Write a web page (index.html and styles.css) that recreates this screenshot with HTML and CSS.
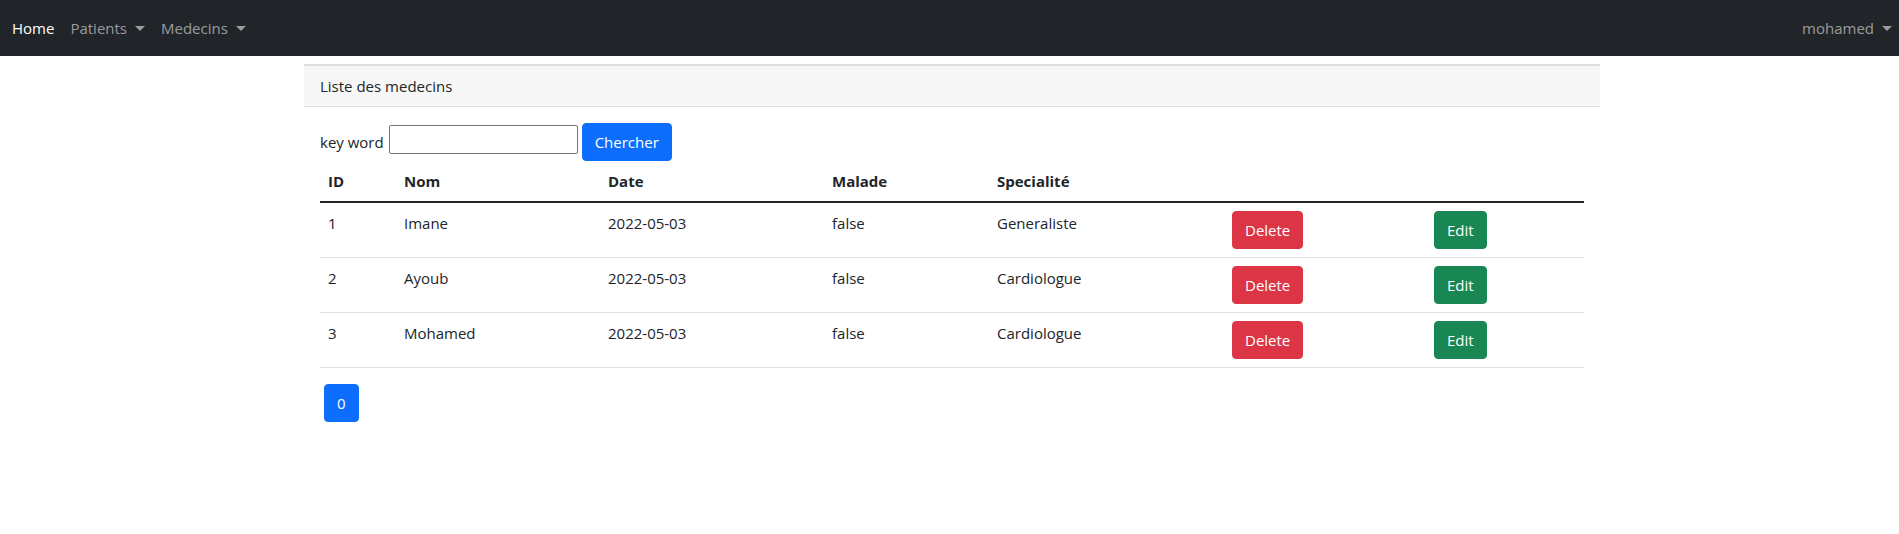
FILE: index.html
```html
<!DOCTYPE html>
<html lang="fr">
<head>
<meta charset="utf-8">
<title>Medecins</title>
<link rel="stylesheet" href="styles.css">
</head>
<body>
<nav class="navbar">
  <ul class="nav">
    <li><a class="nav-link active" href="#">Home</a></li>
    <li><a class="nav-link dropdown" href="#">Patients</a></li>
    <li><a class="nav-link dropdown" href="#">Medecins</a></li>
  </ul>
  <ul class="nav nav-right">
    <li><a class="nav-link dropdown" href="#">mohamed</a></li>
  </ul>
</nav>
<div class="page">
  <div class="container">
    <div class="card">
      <div class="card-header">Liste des medecins</div>
      <div class="card-body">
        <form class="search">
          <label class="search-label">key word</label>
          <input class="search-input" type="text">
          <button class="btn btn-primary" type="button">Chercher</button>
        </form>
        <table class="table">
          <thead>
            <tr>
              <th class="c-id">ID</th>
              <th class="c-nom">Nom</th>
              <th class="c-date">Date</th>
              <th class="c-malade">Malade</th>
              <th class="c-spec">Specialité</th>
              <th class="c-del"></th>
              <th class="c-edit"></th>
            </tr>
          </thead>
          <tbody>
            <tr>
              <td>1</td><td>Imane</td><td>2022-05-03</td><td>false</td><td>Generaliste</td>
              <td><a class="btn btn-danger" href="#">Delete</a></td>
              <td><a class="btn btn-success" href="#">Edit</a></td>
            </tr>
            <tr>
              <td>2</td><td>Ayoub</td><td>2022-05-03</td><td>false</td><td>Cardiologue</td>
              <td><a class="btn btn-danger" href="#">Delete</a></td>
              <td><a class="btn btn-success" href="#">Edit</a></td>
            </tr>
            <tr>
              <td>3</td><td>Mohamed</td><td>2022-05-03</td><td>false</td><td>Cardiologue</td>
              <td><a class="btn btn-danger" href="#">Delete</a></td>
              <td><a class="btn btn-success" href="#">Edit</a></td>
            </tr>
          </tbody>
        </table>
        <ul class="pagination">
          <li><a class="btn btn-primary page-btn" href="#">0</a></li>
        </ul>
      </div>
    </div>
  </div>
</div>
</body>
</html>
```
FILE: styles.css
```css
* { box-sizing: border-box; }
html, body { margin: 0; padding: 0; }
body {
  font-family: "Open Sans", "Noto Sans", sans-serif;
  font-size: 15px;
  line-height: 24px;
  color: #212529;
  background: #fff;
}
a { text-decoration: none; }

.navbar {
  display: flex;
  align-items: center;
  height: 56px;
  background: #212529;
  padding: 0 0 0 4px;
}
.nav {
  display: flex;
  list-style: none;
  margin: 0;
  padding: 0;
}
.nav-right { margin-left: auto; }
.nav-link {
  display: block;
  padding: 8px 8px;
  color: rgba(255, 255, 255, 0.55);
  font-size: 15px;
}
.nav-link.active { color: #fff; }
.nav-right .nav-link { padding-right: 7px; }
.dropdown::after {
  content: "";
  display: inline-block;
  margin-left: 8px;
  vertical-align: 3px;
  border-top: 5px solid;
  border-left: 5px solid transparent;
  border-right: 5px solid transparent;
}

.page { padding: 8px 0 0 5px; }
.container { max-width: 1296px; margin: 0 auto; }

.card { background: #fff; }
.card-header {
  background: #f7f7f7;
  border-top: 2px solid #dfdfdf;
  border-bottom: 1px solid #dfdfdf;
  padding: 8px 16px;
}
.card-body { padding: 16px; }

.search {
  display: flex;
  align-items: flex-start;
  height: 38px;
  margin: 0;
}
.search-label {
  line-height: 38px;
  margin-right: 5px;
}
.search-input {
  width: 189px;
  height: 29px;
  margin: 2px 4px 0 0;
  border: 1px solid #767676;
  border-radius: 2px;
  padding: 1px 2px;
  font: inherit;
}

.btn {
  display: inline-block;
  border: 1px solid transparent;
  border-radius: 4px;
  padding: 6px 12px;
  font-family: inherit;
  font-size: 15px;
  line-height: 24px;
  color: #fff;
  cursor: pointer;
}
.btn-primary { background: #0d6efd; border-color: #0d6efd; }
.btn-danger { background: #dc3545; border-color: #dc3545; }
.btn-success { background: #198754; border-color: #198754; }

.table {
  width: 1264px;
  border-collapse: collapse;
  margin-bottom: 16px;
  table-layout: fixed;
}
.table th, .table td {
  text-align: left;
  vertical-align: top;
  padding: 8px;
}
.table th { font-weight: 700; border-bottom: 2px solid #212529; }
.table td { border-bottom: 1px solid #dee2e6; }
.c-id { width: 76px; }
.c-nom { width: 204px; }
.c-date { width: 224px; }
.c-malade { width: 165px; }
.c-spec { width: 235px; }
.c-del { width: 202px; }
.c-edit { width: 158px; }

.pagination {
  list-style: none;
  margin: 0;
  padding: 0;
  display: flex;
}
.page-btn { margin-left: 4px; }
```
